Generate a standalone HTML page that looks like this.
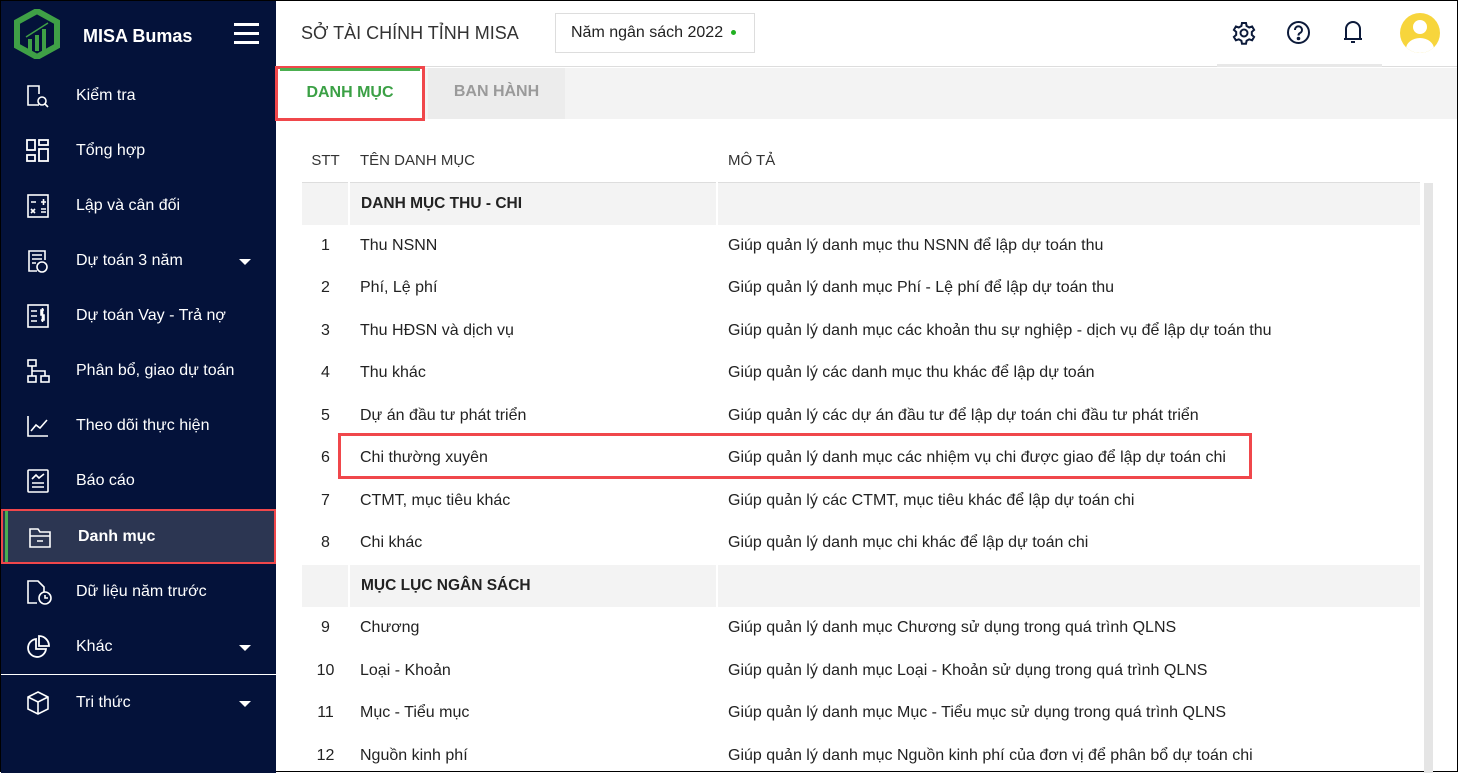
<!DOCTYPE html>
<html><head><meta charset="utf-8"><style>
*{box-sizing:border-box;margin:0;padding:0}
body{width:1458px;height:772px;overflow:hidden;font-family:"Liberation Sans",Roboto,sans-serif;background:#fff;position:relative;border:1px solid #000}
#side{position:absolute;left:0;top:0;width:275px;height:772px;background:#04123a;color:#fff}
.logo{position:absolute;left:13px;top:8px}
.brand{position:absolute;left:82px;top:25px;font-size:18px;font-weight:bold}
.burger{position:absolute;left:233px;top:22px;width:25px}
.burger i{display:block;height:3px;background:#fff;margin-bottom:6px}
.it{position:absolute;left:0;width:275px;height:55px;font-size:16px}
.it span{position:absolute;left:75px;top:50%;transform:translateY(-50%)}
.it svg{position:absolute;left:25px;top:50%;transform:translateY(-50%)}
.car{position:absolute;left:238px;top:50%;margin-top:-2px;border-left:6px solid transparent;border-right:6px solid transparent;border-top:6px solid #fff}
.sel{background:#2c3652;border:2px solid #f0474b;font-weight:bold}
.sel:before{content:"";position:absolute;left:2px;top:0;bottom:0;width:3px;background:#4caf50}
#hdr{position:absolute;left:275px;top:0;right:0;height:66px;border-bottom:1px solid #ddd}
.title{position:absolute;left:25px;top:22px;font-size:18px;color:#333}
.year{position:absolute;left:279px;top:12px;width:200px;height:40px;border:1px solid #ddd;font-size:16px;padding:10px 15px;color:#222}
.year b{display:inline-block;width:5px;height:5px;border-radius:50%;background:#21b021;margin-left:8px;vertical-align:middle}
#tabs{position:absolute;left:275px;top:67px;right:0;height:51px;background:#f3f3f3}
.t1{position:absolute;left:0;top:0;width:150px;height:55px;background:#fff;border:3px solid #f0474b;color:#3ba045;font-weight:bold;font-size:16px;text-align:center;padding-top:15px}
.t1:before{content:"";position:absolute;left:2px;right:2px;top:-1px;height:3px;background:#4caf50}
.t2{position:absolute;left:152px;top:0;width:137px;height:51px;background:#ececec;color:#9a9a9a;font-weight:bold;font-size:16px;text-align:center;padding-top:15px}
table{position:absolute;left:301px;top:138px;width:1120px;border-collapse:collapse;font-size:16px;color:#222}
td,th{height:42.5px;padding:0 11px;text-align:left;white-space:nowrap}
th{font-weight:normal;height:43px;border-bottom:1px solid #ddd;color:#333;font-size:15px}
td:first-child,th:first-child{width:47px;text-align:center;padding:0}
td:nth-child(2){width:368px}
tr.g td{background:#f3f3f3;font-weight:bold;border-right:2px solid #fff;font-size:15.5px}
.scroll{position:absolute;left:1423px;top:182px;width:9px;height:590px;background:#e5e5e5}
.hl{position:absolute;left:337px;top:432px;width:914px;height:46px;border:3px solid #f0474b}
</style></head><body>
<div id="side">
<svg class="logo" width="46" height="50" viewBox="0 0 46 50"><path d="M23 2 L43 13 V37 L23 48 L3 37 V13 Z" fill="none" stroke="#3fa046" stroke-width="6"/><rect x="14" y="30" width="4" height="12" fill="#3fa046"/><rect x="21" y="26" width="4" height="16" fill="#3fa046"/><rect x="28" y="20" width="4" height="22" fill="#3fa046"/><path d="M12 28 L34 14" stroke="#3fa046" stroke-width="1.5"/></svg>
<div class="brand">MISA Bumas</div>
<div class="burger"><i></i><i></i><i></i></div>
<div class="it" style="top:67px"><svg width="24" height="24" fill="none" stroke="#fff" stroke-width="1.6"><path d="M13 21H2V2h11v8"/><circle cx="16" cy="17" r="4"/><path d="M19 20l3 3"/></svg><span>Kiểm tra</span></div>
<div class="it" style="top:122px"><svg width="24" height="24" fill="none" stroke="#fff" stroke-width="1.8"><rect x="1" y="1" width="8" height="10"/><rect x="13" y="1" width="9" height="5"/><rect x="1" y="16" width="8" height="6"/><rect x="13" y="10" width="9" height="12"/></svg><span>Tổng hợp</span></div>
<div class="it" style="top:177px"><svg width="24" height="24" fill="none" stroke="#fff" stroke-width="1.6"><rect x="2" y="1" width="20" height="22"/><path d="M5 8h5M15 8h5M17.5 5v6M5 15l4 4M9 15l-4 4M15 15h5M15 18h5"/></svg><span>Lập và cân đối</span></div>
<div class="it" style="top:232px"><svg width="24" height="24" fill="none" stroke="#fff" stroke-width="1.6"><path d="M11 22H3V2h16v9M6 6h10M6 10h10M6 14h4"/><circle cx="16" cy="18" r="5"/></svg><span>Dự toán 3 năm</span><i class="car"></i></div>
<div class="it" style="top:287px"><svg width="24" height="24" fill="none" stroke="#fff" stroke-width="1.6"><rect x="2" y="1" width="20" height="22"/><path d="M5 7h6M5 12h6M5 17h6M18 6h-3v5h3v5h-3M16.5 4v14"/></svg><span>Dự toán Vay - Trả nợ</span></div>
<div class="it" style="top:342px"><svg width="24" height="24" fill="none" stroke="#fff" stroke-width="1.6"><rect x="2" y="1" width="8" height="6"/><rect x="2" y="17" width="8" height="6"/><rect x="15" y="17" width="8" height="6"/><path d="M6 7v10M6 12h13v5"/></svg><span>Phân bổ, giao dự toán</span></div>
<div class="it" style="top:397px"><svg width="24" height="24" fill="none" stroke="#fff" stroke-width="1.6"><path d="M2 2v20h20M5 17l5-6 4 3 7-8"/></svg><span>Theo dõi thực hiện</span></div>
<div class="it" style="top:452px"><svg width="24" height="24" fill="none" stroke="#fff" stroke-width="1.6"><rect x="2" y="1" width="20" height="22" rx="1"/><path d="M6 10l4-4 3 3 5-4M6 14h12M6 18h12"/></svg><span>Báo cáo</span></div>
<div class="it sel" style="top:508px"><svg width="24" height="24" fill="none" stroke="#fff" stroke-width="1.6"><path d="M2 4h8l2 3h10v15H2zM2 11h20M9 16h6"/></svg><span>Danh mục</span></div>
<div class="it" style="top:563px"><svg width="26" height="26" fill="none" stroke="#fff" stroke-width="1.6"><path d="M11 24H2V2h10l6 6v5"/><circle cx="19" cy="19" r="6"/><path d="M19 16v3h3"/></svg><span>Dữ liệu năm trước</span></div>
<div class="it" style="top:618px"><svg width="24" height="24" fill="none" stroke="#fff" stroke-width="1.8"><path d="M10 4a9 9 0 1 0 10 10H10z"/><path d="M13 1v10h10A10 10 0 0 0 13 1z"/></svg><span>Khác</span><i class="car"></i></div>
<div style="position:absolute;left:0;top:673px;width:275px;height:1px;background:#fff"></div>
<div class="it" style="top:674px"><svg width="24" height="24" fill="none" stroke="#fff" stroke-width="1.6"><path d="M12 1l10 5v12l-10 5-10-5V6zM2 6l10 5 10-5M12 11v12"/></svg><span>Tri thức</span><i class="car"></i></div>
</div>
<div id="hdr"><div class="title">SỞ TÀI CHÍNH TỈNH MISA</div><div class="year">Năm ngân sách 2022<b></b></div>
<svg style="position:absolute;left:956px;top:20px" width="24" height="24" fill="none" stroke="#0c1a3a" stroke-width="2"><circle cx="12" cy="12" r="3.5"/><path d="M10 2h4l.6 3 2.6 1.5 2.9-1 2 3.4-2.3 2v3l2.3 2-2 3.4-2.9-1-2.6 1.5-.6 3h-4l-.6-3-2.6-1.5-2.9 1-2-3.4 2.3-2v-3l-2.3-2 2-3.4 2.9 1L9.4 5z"/></svg>
<svg style="position:absolute;left:1010px;top:19px" width="25" height="25" fill="none" stroke="#0c1a3a" stroke-width="2"><circle cx="12.5" cy="12.5" r="10.5"/><path d="M9 10a3.5 3.5 0 1 1 5 3c-1.2.6-1.5 1.3-1.5 2.5"/><circle cx="12.5" cy="18.5" r=".8" fill="#0c1a3a"/></svg>
<svg style="position:absolute;left:1066px;top:19px" width="22" height="25" fill="none" stroke="#0c1a3a" stroke-width="2"><path d="M4 19V9a7 7 0 0 1 14 0v10zM2 19h18M9 22h4"/></svg>
<div style="position:absolute;left:1124px;top:12px;width:40px;height:40px;border-radius:50%;background:#f7d53c;overflow:hidden"><div style="position:absolute;left:13px;top:7px;width:14px;height:14px;border-radius:50%;background:#fff"></div><div style="position:absolute;left:6px;top:25px;width:28px;height:22px;border-radius:50%;background:#fff"></div></div>
<div style="position:absolute;left:941px;top:63px;width:165px;height:3px;background:#e8e8e8"></div>
</div>
<div id="tabs"><div class="t1" style="left:-1px;top:-2px">DANH MỤC</div><div class="t2">BAN HÀNH</div></div>
<div class="scroll"></div>
<table>
<tr><th>STT</th><th>TÊN DANH MỤC</th><th>MÔ TẢ</th></tr>
<tr class="g"><td></td><td>DANH MỤC THU - CHI</td><td></td></tr>
<tr><td>1</td><td>Thu NSNN</td><td>Giúp quản lý danh mục thu NSNN để lập dự toán thu</td></tr>
<tr><td>2</td><td>Phí, Lệ phí</td><td>Giúp quản lý danh mục Phí - Lệ phí để lập dự toán thu</td></tr>
<tr><td>3</td><td>Thu HĐSN và dịch vụ</td><td>Giúp quản lý danh mục các khoản thu sự nghiệp - dịch vụ để lập dự toán thu</td></tr>
<tr><td>4</td><td>Thu khác</td><td>Giúp quản lý các danh mục thu khác để lập dự toán</td></tr>
<tr><td>5</td><td>Dự án đầu tư phát triển</td><td>Giúp quản lý các dự án đầu tư để lập dự toán chi đầu tư phát triển</td></tr>
<tr><td>6</td><td>Chi thường xuyên</td><td>Giúp quản lý danh mục các nhiệm vụ chi được giao để lập dự toán chi</td></tr>
<tr><td>7</td><td>CTMT, mục tiêu khác</td><td>Giúp quản lý các CTMT, mục tiêu khác để lập dự toán chi</td></tr>
<tr><td>8</td><td>Chi khác</td><td>Giúp quản lý danh mục chi khác để lập dự toán chi</td></tr>
<tr class="g"><td></td><td>MỤC LỤC NGÂN SÁCH</td><td></td></tr>
<tr><td>9</td><td>Chương</td><td>Giúp quản lý danh mục Chương sử dụng trong quá trình QLNS</td></tr>
<tr><td>10</td><td>Loại - Khoản</td><td>Giúp quản lý danh mục Loại - Khoản sử dụng trong quá trình QLNS</td></tr>
<tr><td>11</td><td>Mục - Tiểu mục</td><td>Giúp quản lý danh mục Mục - Tiểu mục sử dụng trong quá trình QLNS</td></tr>
<tr><td>12</td><td>Nguồn kinh phí</td><td>Giúp quản lý danh mục Nguồn kinh phí của đơn vị để phân bổ dự toán chi</td></tr>
</table>
<div class="hl"></div>
</body></html>
